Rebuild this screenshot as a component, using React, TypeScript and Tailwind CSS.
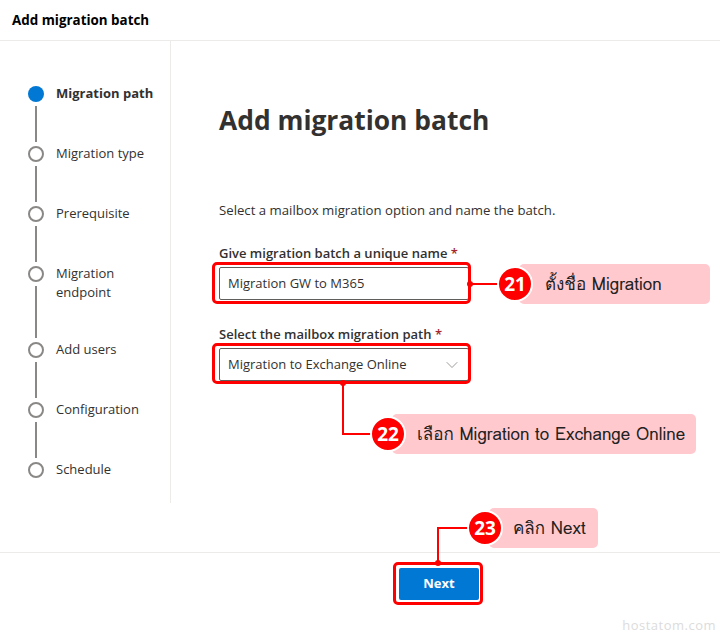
import { ChevronDown } from "lucide-react";

const steps = [
  { label: "Migration path", active: true, h: "h-[60px]" },
  { label: "Migration type", h: "h-[60px]" },
  { label: "Prerequisite", h: "h-[60px]" },
  { label: "Migration endpoint", h: "h-[76px]", wrap: true },
  { label: "Add users", h: "h-[60px]" },
  { label: "Configuration", h: "h-[60px]" },
  { label: "Schedule", h: "h-[30px]", last: true },
];

function Badge({ n }: { n: string }) {
  return (
    <div className="w-[36px] h-[36px] rounded-full bg-[#f00] border-2 border-white flex items-center justify-center text-white text-[19px] font-bold z-10 shrink-0 font-['Open_Sans',sans-serif]">
      {n}
    </div>
  );
}

const thai = "font-['Loma','Garuda','Noto_Sans_Thai','Tahoma',sans-serif] font-normal";

export default function App() {
  return (
    <div className="relative w-[720px] h-[635px] bg-white text-[#323130] font-['Segoe_UI','Open_Sans',sans-serif] overflow-hidden">
      {/* Header */}
      <div className="h-[41px] border-b border-[#edebe9] px-3 flex items-center">
        <h1 className="text-[13.4px] font-bold text-black">Add migration batch</h1>
      </div>

      {/* Body */}
      <div className="flex h-[511px]">
        <nav className="w-[171px] h-[462px] border-r border-[#edebe9] pt-[45px] pl-[28px] shrink-0">
          {steps.map((s) => (
            <div key={s.label} className={`flex gap-[12px] ${s.h}`}>
              <div className="w-[16px] flex flex-col items-center">
                {s.active ? (
                  <div className="w-[16px] h-[16px] rounded-full bg-[#0078d4] shrink-0" />
                ) : (
                  <div className="w-[16px] h-[16px] rounded-full border-2 border-[#8a8886] shrink-0" />
                )}
                {!s.last && <div className="w-[2px] flex-1 bg-[#8a8886] my-[4px]" />}
              </div>
              <span
                className={`text-[13px] leading-[19px] -mt-[2px] ${s.active ? "font-bold" : ""} ${s.wrap ? "w-[70px]" : ""}`}
              >
                {s.label}
              </span>
            </div>
          ))}
        </nav>

        <main className="pl-[48px] pt-[61px]">
          <h2 className="text-[26.4px] leading-[36px] font-bold text-[#323130]">Add migration batch</h2>
          <p className="mt-[62px] text-[13.2px] leading-[20px]">Select a mailbox migration option and name the batch.</p>

          <label className="block mt-[23px] text-[13px] leading-[20px] font-semibold">
            Give migration batch a unique name <span className="text-[#a4262c]">*</span>
          </label>
          <div className="mt-[4px] w-[250px] h-[33px] border border-[#605e5c] rounded-[2px] px-[8px] flex items-center text-[13px]">
            Migration GW to M365
          </div>

          <label className="block mt-[24px] text-[13px] leading-[20px] font-semibold">
            Select the mailbox migration path <span className="text-[#a4262c]">*</span>
          </label>
          <div className="mt-[4px] w-[250px] h-[33px] border border-[#605e5c] rounded-[2px] pl-[8px] pr-[6px] flex items-center justify-between text-[13px]">
            <span>Migration to Exchange Online</span>
            <ChevronDown className="w-[20px] h-[20px] text-[#8a8886]" strokeWidth={1} />
          </div>
        </main>
      </div>

      {/* Footer */}
      <div className="border-t border-[#edebe9] pl-[399px] pt-[15px]">
        <button className="w-[80px] h-[32px] bg-[#0078d4] rounded-[2px] text-white text-[13px] font-bold">Next</button>
      </div>

      <div className="absolute right-[4px] bottom-[0px] text-[13px] text-[#dcdcdc] font-['Open_Sans',sans-serif] tracking-[0.5px]">hostatom.com</div>

      {/* Annotations */}
      <div className="absolute left-[212px] top-[262px] w-[259px] h-[42px] border-[3px] border-[#f00] rounded-[5px]" />
      <div className="absolute left-[212px] top-[343px] w-[259px] h-[41px] border-[3px] border-[#f00] rounded-[5px]" />
      <div className="absolute left-[393px] top-[562px] w-[90px] h-[43px] border-[3px] border-[#f00] rounded-[5px]" />

      {/* 21 */}
      <div className="absolute left-[467px] top-[281px] w-[6px] h-[6px] rounded-full bg-[#f00]" />
      <div className="absolute left-[470px] top-[283px] w-[30px] h-[2px] bg-[#f00]" />
      <div className={`absolute left-[497px] top-[264px] flex items-center ${thai}`}>
        <Badge n="21" />
        <div className="-ml-[14px] h-[40px] w-[191px] shrink-0 bg-[#ffc9ce] rounded-[5px] pl-[26px] flex items-center text-[17px] text-[#222]">
          ตั้งชื่อ Migration
        </div>
      </div>

      {/* 22 */}
      <div className="absolute left-[340px] top-[380px] w-[6px] h-[6px] rounded-full bg-[#f00]" />
      <div className="absolute left-[342px] top-[383px] w-[2px] h-[52px] bg-[#f00]" />
      <div className="absolute left-[342px] top-[433px] w-[30px] h-[2px] bg-[#f00]" />
      <div className={`absolute left-[370px] top-[414px] flex items-center ${thai}`}>
        <Badge n="22" />
        <div className="-ml-[14px] h-[40px] w-[304px] shrink-0 bg-[#ffc9ce] rounded-[5px] pl-[25px] flex items-center text-[17px] text-[#222]">
          เลือก Migration to Exchange Online
        </div>
      </div>

      {/* 23 */}
      <div className="absolute left-[435px] top-[560px] w-[6px] h-[6px] rounded-full bg-[#f00]" />
      <div className="absolute left-[437px] top-[527px] w-[2px] h-[36px] bg-[#f00]" />
      <div className="absolute left-[437px] top-[527px] w-[33px] h-[2px] bg-[#f00]" />
      <div className={`absolute left-[467px] top-[508px] flex items-center ${thai}`}>
        <Badge n="23" />
        <div className="-ml-[14px] h-[40px] w-[109px] shrink-0 bg-[#ffc9ce] rounded-[5px] pl-[24px] flex items-center text-[17px] text-[#222]">
          คลิก Next
        </div>
      </div>
    </div>
  );
}
